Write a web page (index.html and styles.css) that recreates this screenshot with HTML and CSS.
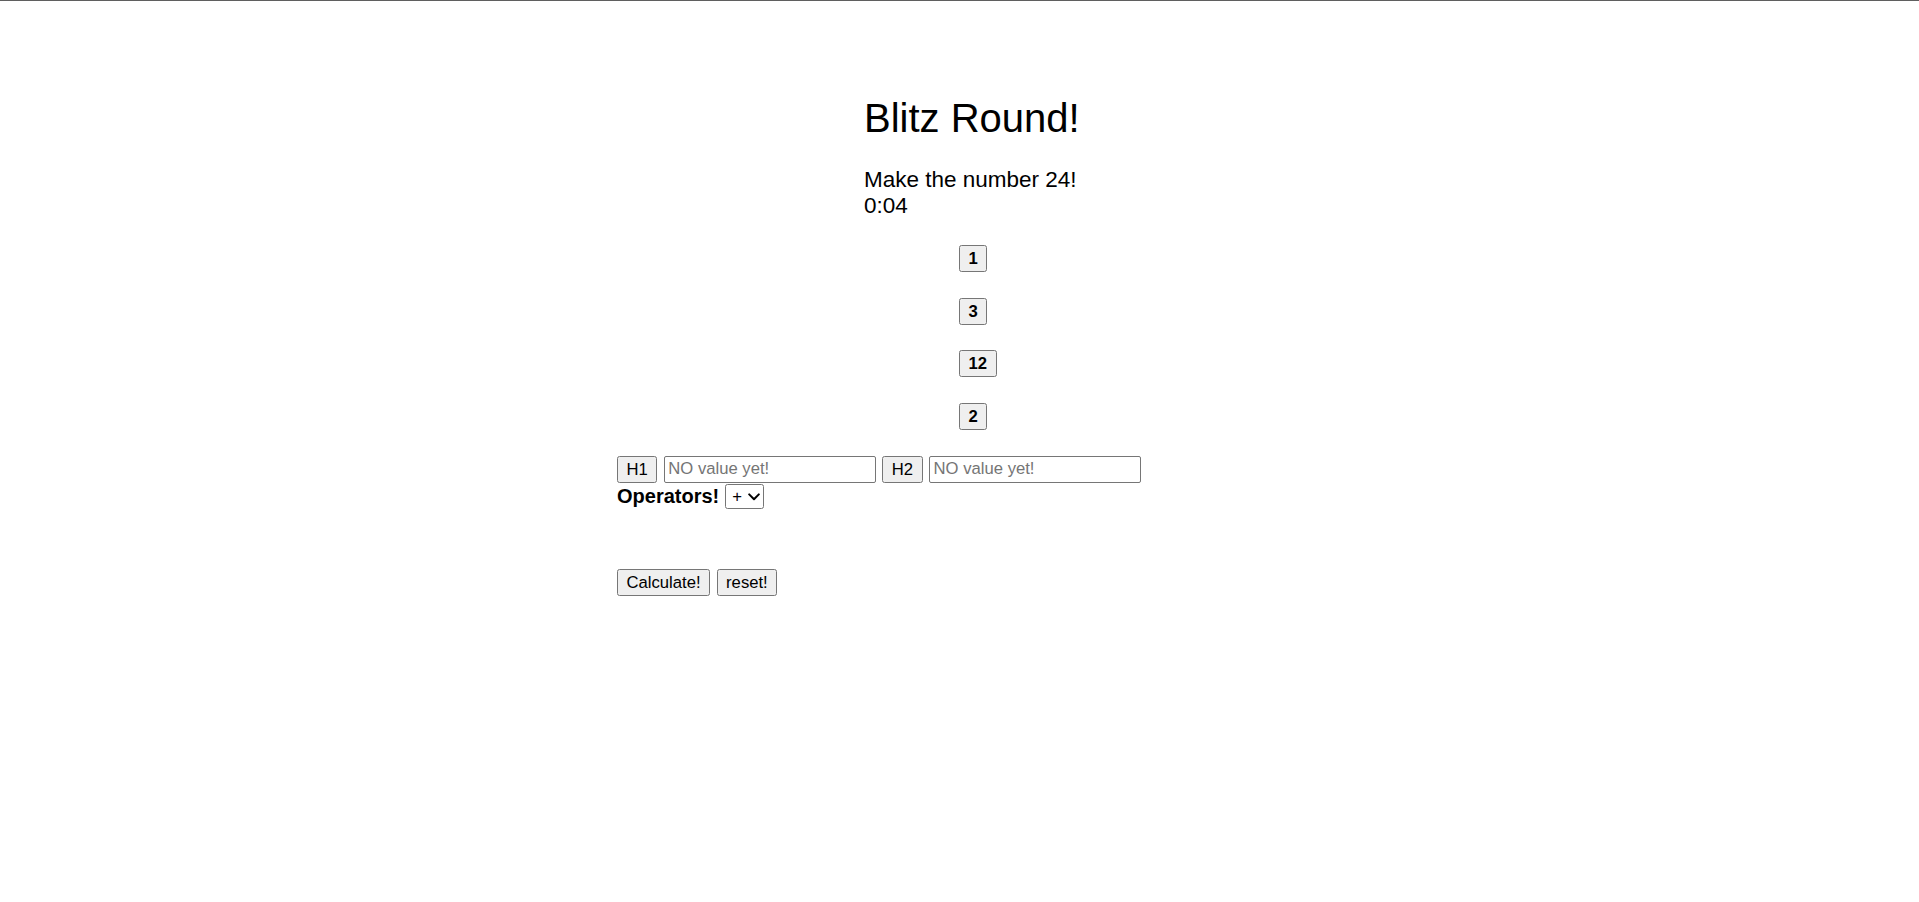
FILE: index.html
```html
<!DOCTYPE html>
<html lang="en">
<head>
<meta charset="utf-8">
<title>Blitz Round!</title>
<link rel="stylesheet" href="styles.css">
</head>
<body>
<div class="topline"></div>
<main class="game">
  <header class="intro">
    <h1 class="title">Blitz Round!</h1>
    <p class="goal">Make the number 24!</p>
    <p class="timer">0:04</p>
  </header>
  <div class="numbers">
    <button class="btn num">1</button>
    <button class="btn num">3</button>
    <button class="btn num">12</button>
    <button class="btn num">2</button>
  </div>
  <div class="slots">
    <button class="btn">H1</button>
    <input class="slot" type="text" placeholder="NO value yet!">
    <button class="btn">H2</button>
    <input class="slot" type="text" placeholder="NO value yet!">
  </div>
  <div class="ops">
    <label class="ops-label" for="op">Operators!</label>
    <span class="op-wrap">
      <select class="op-select" id="op">
        <option>+</option>
        <option>-</option>
        <option>*</option>
        <option>/</option>
      </select>
      <svg class="op-chevron" width="12" height="8" viewBox="0 0 12 8" aria-hidden="true">
        <path d="M1.2 1.4 L6 6.2 L10.8 1.4" fill="none" stroke="#000" stroke-width="2" stroke-linecap="round" stroke-linejoin="round"/>
      </svg>
    </span>
  </div>
  <div class="actions">
    <button class="btn">Calculate!</button>
    <button class="btn">reset!</button>
  </div>
</main>
</body>
</html>
```

FILE: styles.css
```css
html, body {
  margin: 0;
  padding: 0;
  background: #ffffff;
}

body {
  font-family: "Liberation Sans", Arial, sans-serif;
  color: #000000;
}

.topline {
  height: 1px;
  background: #5f5f5f;
}

.game {
  padding: 94px 0 0 617px;
}

.intro {
  margin-left: 247px;
}

.title {
  margin: 0;
  font-size: 40px;
  font-weight: normal;
  line-height: 46px;
}

.goal {
  margin: 25.5px 0 0;
  font-size: 22.5px;
  line-height: 26px;
}

.timer {
  margin: 0;
  font-size: 22.5px;
  line-height: 26px;
}

.numbers {
  margin: 26.5px 0 0 342px;
  display: flex;
  flex-direction: column;
  align-items: flex-start;
  gap: 25.5px;
}

.btn {
  font-family: "Liberation Sans", Arial, sans-serif;
  font-size: 16.67px;
  color: #000000;
  background: #efefef;
  border: 1px solid #767676;
  border-radius: 2.5px;
  padding: 0 8.5px;
  height: 27px;
  box-sizing: border-box;
  line-height: 25px;
  margin: 0;
}

.num {
  font-weight: bold;
}

.slots {
  margin-top: 26px;
  display: flex;
  align-items: center;
  gap: 6.5px;
}

.slot {
  width: 212px;
  height: 27px;
  box-sizing: border-box;
  border: 1px solid #767676;
  border-radius: 2px;
  padding: 0 3.5px;
  margin: 0;
  font-family: "Liberation Sans", Arial, sans-serif;
  font-size: 16.67px;
  background: #ffffff;
}

.slot::placeholder {
  color: #757575;
}

.ops {
  margin-top: 1px;
  display: flex;
  align-items: center;
  gap: 6px;
}

.ops-label {
  font-size: 20px;
  font-weight: bold;
  line-height: 23px;
}

.op-wrap {
  position: relative;
  display: inline-flex;
}

.op-select {
  -webkit-appearance: none;
  appearance: none;
  width: 39px;
  height: 25px;
  box-sizing: border-box;
  margin: 0;
  padding: 0 0 0 6px;
  font-family: "Liberation Sans", Arial, sans-serif;
  font-size: 16.67px;
  border: 1px solid #767676;
  border-radius: 2.5px;
  background: #ffffff;
  color: #000000;
}

.op-chevron {
  position: absolute;
  left: 22.5px;
  top: 9px;
  pointer-events: none;
}

.actions {
  margin-top: 60.5px;
  display: flex;
  gap: 6.5px;
}
```
